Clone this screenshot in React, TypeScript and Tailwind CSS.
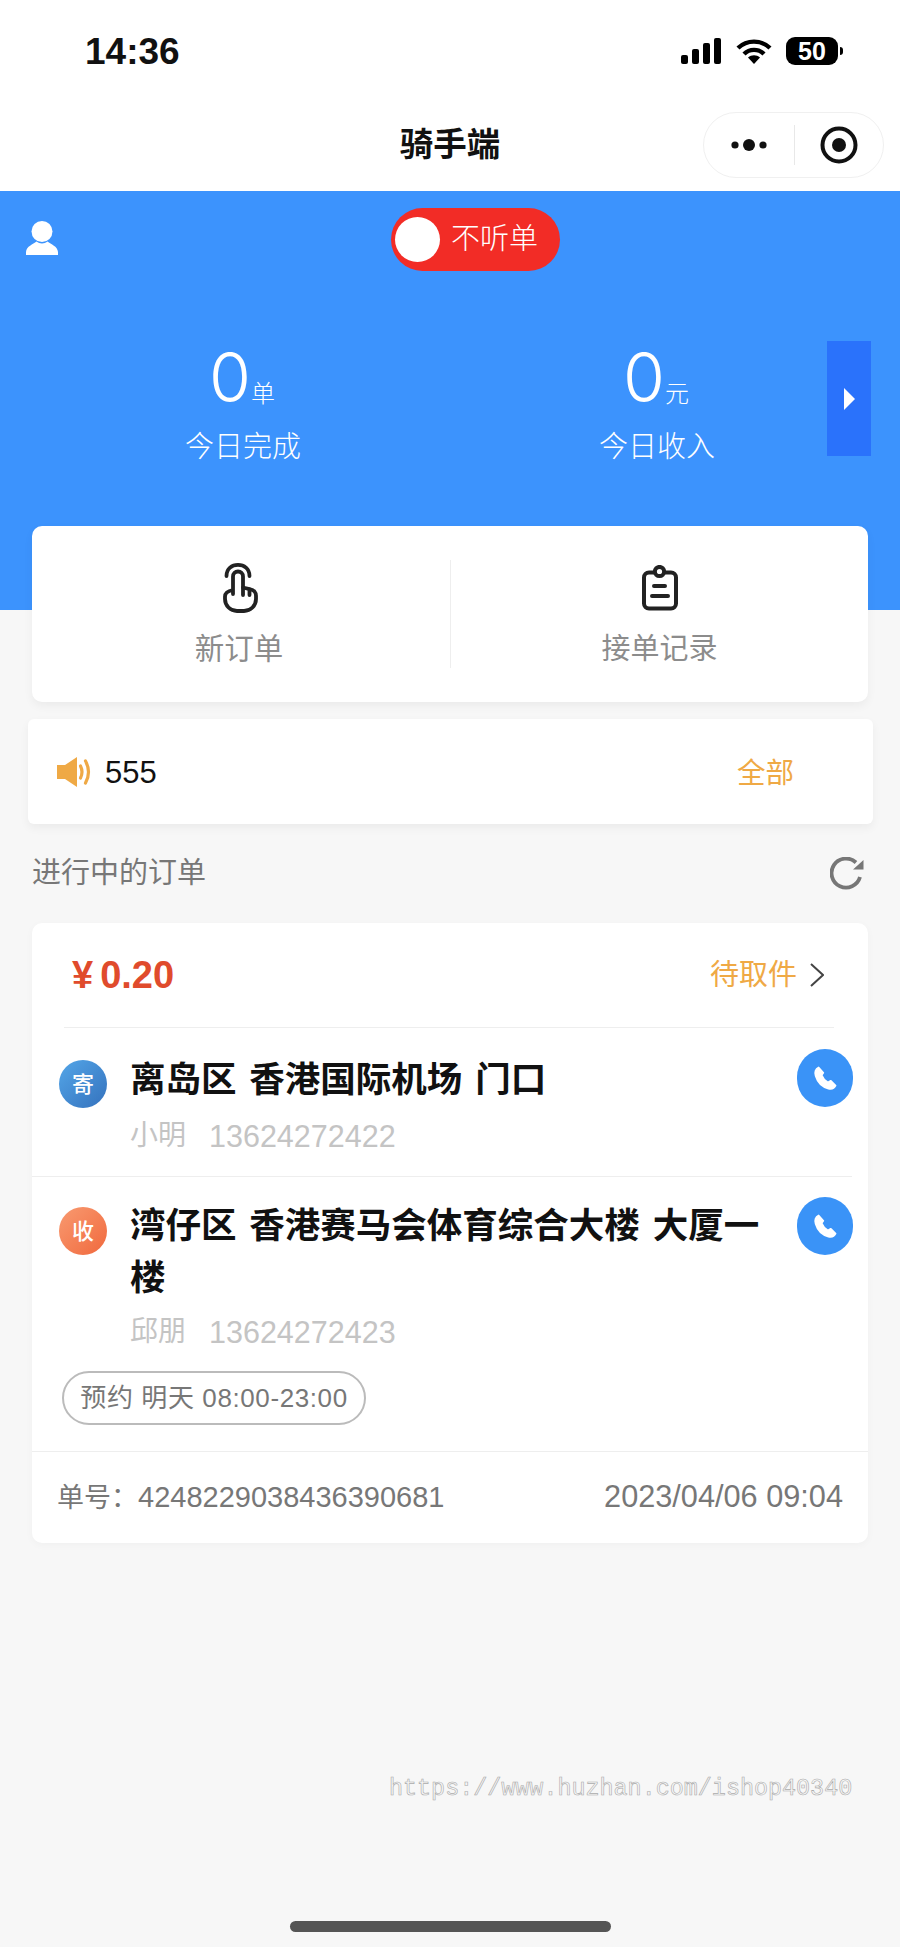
import { ReactNode } from 'react';

// Status bar glyphs
function SignalIcon() {
  return (
    <svg width="41" height="26" viewBox="0 0 41 26" fill="#000">
      <rect x="0" y="17" width="7" height="9" rx="2" />
      <rect x="11" y="11" width="7" height="15" rx="2" />
      <rect x="22" y="5" width="7" height="21" rx="2" />
      <rect x="33" y="0" width="7" height="26" rx="2" />
    </svg>
  );
}

function WifiIcon() {
  return (
    <svg width="36" height="25" viewBox="0 0 36 25" fill="none" stroke="#000" strokeWidth="4.4">
      <path d="M2 9 C11 0.5 25 0.5 34 9" />
      <path d="M8 15 C13.5 9.5 22.5 9.5 28 15" />
      <path d="M18 25 L12 18.5 C15.5 15.5 20.5 15.5 24 18.5 Z" fill="#000" stroke="none" />
    </svg>
  );
}

function Battery() {
  return (
    <div className="flex items-center gap-[2px]">
      <div className="w-[52px] h-[28px] bg-black rounded-[9px] flex items-center justify-center text-white font-bold text-[25px] leading-none">
        50
      </div>
      <div className="w-[3px] h-[8px] bg-black rounded-r-full" />
    </div>
  );
}

function PersonIcon() {
  return (
    <svg width="32" height="34" viewBox="0 0 32 34" fill="#fff">
      <ellipse cx="16" cy="10.5" rx="10.5" ry="10.5" />
      <path d="M0 34 V31 C0.5 25 7 23.5 10.5 20.5 C13.5 23 18.5 23 21.5 20.5 C25 23.5 31.5 25 32 31 V34 Z" />
    </svg>
  );
}

function HandIcon() {
  return (
    <svg width="36" height="50" viewBox="0 0 36 50" fill="none" stroke="#222" strokeWidth="3.8" strokeLinecap="round" strokeLinejoin="round">
      <path d="M3.5 13 C3.5 5.5 9 1.9 15 1.9 C21 1.9 26.5 5.5 26.5 13" />
      <path d="M10 31 V13.5 a5 5 0 0 1 10 0 V24.5 l7.5 1.8 a6.5 6.5 0 0 1 5.5 6.4 V36 a12 12 0 0 1 -12 12 H14 a12 12 0 0 1 -12 -12 V33.5 c0 -3 3 -5.5 8 -6.5" />
      <path d="M20 24.5 V32 M26.5 26.5 V32" />
    </svg>
  );
}

function ClipboardIcon() {
  return (
    <svg width="36" height="46" viewBox="0 0 36 46" fill="none" stroke="#222" strokeWidth="4" strokeLinecap="round">
      <rect x="2" y="7.5" width="32" height="36" rx="5" />
      <circle cx="17.5" cy="6.5" r="4.6" fill="#fff" />
      <path d="M12 21 H23 M10 31 H26" />
    </svg>
  );
}

function SpeakerIcon() {
  return (
    <svg width="36" height="30" viewBox="0 0 36 30" fill="none" stroke="#efa945">
      <path d="M1 8 H9 L21 0 V30 L9 22 H1 Z" fill="#efa945" stroke="none" />
      <path d="M24.5 9 Q27.5 15 24.5 21" strokeWidth="3.2" strokeLinecap="round" />
      <path d="M29.5 4 Q35.5 15 29.5 26" strokeWidth="3.2" strokeLinecap="round" />
    </svg>
  );
}

function RefreshIcon() {
  return (
    <svg width="34" height="33" viewBox="0 0 34 33" fill="none">
      <path d="M26 5.5 A14.5 14.5 0 1 0 30 20" stroke="#777" strokeWidth="3.8" />
      <path d="M33.5 3 V12.5 H23 Z" fill="#777" />
    </svg>
  );
}

function PhoneButton() {
  return (
    <div className="w-[56px] h-[58px] shrink-0 rounded-full bg-[#3a93f7] flex items-center justify-center">
      <svg width="28" height="28" viewBox="0 0 24 24" fill="#fff" stroke="#fff" strokeWidth="1.6" strokeLinejoin="round">
        <path d="M6.5 3 C4 4 3 7 4 10 C5.5 15 9.5 19.5 15 21 C18 21.7 20 20.5 21 18.5 L17 14.5 L14.5 16 C12 14.5 10 12 9 9.5 L10.5 7.5 Z" />
      </svg>
    </div>
  );
}

function Stat({ value, unit, label }: { value: string; unit: string; label: string }) {
  return (
    <div className="flex flex-col items-center text-white">
      <div className="flex items-baseline h-[68px] mr-[2px]">
        <span className="font-['Inter',sans-serif] font-light text-[68px] leading-[68px]">{value}</span>
        <span className="text-[24px] leading-none font-light">{unit}</span>
      </div>
      <div className="text-[29px] leading-[40px] mt-[16px] font-light">{label}</div>
    </div>
  );
}

function Address(props: {
  badge: string;
  badgeClass: string;
  title: ReactNode;
  name: string;
  phone: string;
  badgeTop: string;
  textTop: string;
  phoneTop: string;
  contactTop: string;
}) {
  return (
    <div className="flex pl-[27px]">
      <div className={`w-[48px] h-[48px] shrink-0 rounded-full flex items-center justify-center text-white text-[22px] font-medium ${props.badgeClass} ${props.badgeTop}`}>
        {props.badge}
      </div>
      <div className={`w-[667px] ml-[23px] pr-[16px] ${props.textTop}`}>
        <div className="text-[35.5px] leading-[52px] font-bold text-[#111] [word-spacing:3px]">{props.title}</div>
        <div className={`flex text-[#c4c4c4] text-[28px] leading-[40px] ${props.contactTop}`}>
          <span className="w-[79px]">{props.name}</span>
          <span className="text-[30.5px]">{props.phone}</span>
        </div>
      </div>
      <div className={props.phoneTop}>
        <PhoneButton />
      </div>
    </div>
  );
}

export default function App() {
  return (
    <div className="w-[900px] h-[1947px] overflow-hidden bg-[#f7f7f7] font-['Liberation_Sans','Noto_Sans_CJK_SC',sans-serif]">
      <div className="bg-white">
        {/* status bar */}
        <div className="h-[102px] flex items-center justify-between pl-[85px] pr-[57px]">
          <span className="text-[37px] font-bold text-[#111] leading-none">14:36</span>
          <div className="flex items-center gap-[14px]">
            <SignalIcon />
            <WifiIcon />
            <Battery />
          </div>
        </div>
        {/* nav bar */}
        <div className="h-[89px] pb-[3px] grid grid-cols-[1fr_auto_1fr] items-center">
          <div />
          <div className="text-[33.5px] font-bold text-[#111] leading-none">骑手端</div>
          <div className="justify-self-end mr-[16px] w-[181px] h-[66px] rounded-full border border-[#f0f0f0] flex items-center">
            <div className="w-[90px] flex items-center justify-center">
              <svg width="36" height="14" viewBox="0 0 36 14" fill="#111">
                <circle cx="4" cy="7" r="3.6" />
                <circle cx="18" cy="7" r="6" />
                <circle cx="32" cy="7" r="3.6" />
              </svg>
            </div>
            <div className="w-px h-[40px] bg-[#e8e8e8]" />
            <div className="flex-1 flex items-center justify-center">
              <svg width="38" height="38" viewBox="0 0 38 38">
                <circle cx="19" cy="19" r="16.5" fill="none" stroke="#111" strokeWidth="4" />
                <circle cx="19" cy="19" r="7" fill="#111" />
              </svg>
            </div>
          </div>
        </div>
      </div>

      {/* blue header */}
      <div className="relative h-[419px] bg-[#3c93fd]">
        <div className="flex items-start pt-[17px]">
          <div className="ml-[26px] mt-[13px]">
            <PersonIcon />
          </div>
          <div className="ml-[333px] w-[169px] h-[63px] rounded-full bg-[#f22c26] flex items-center pl-[4px]">
            <div className="w-[45px] h-[45px] rounded-full bg-white" />
            <span className="ml-[11px] text-white text-[29px] leading-none font-light">不听单</span>
          </div>
        </div>
        <div className="ml-[36px] w-[828px] mt-[72px] grid grid-cols-2">
          <Stat value="0" unit="单" label="今日完成" />
          <Stat value="0" unit="元" label="今日收入" />
        </div>
        <div className="absolute right-[29px] top-[150px] w-[44px] h-[115px] bg-[#2a72fb] flex items-center justify-center">
          <svg width="11" height="22" viewBox="0 0 11 22" fill="#fff">
            <path d="M0 0 L11 11 L0 22 Z" />
          </svg>
        </div>
      </div>

      {/* entry card */}
      <div className="-mt-[84px] relative ml-[32px] w-[836px] h-[176px] bg-white rounded-[10px] shadow-[0_4px_10px_rgba(0,0,0,0.05)] flex items-start">
        <div className="w-[418px] flex flex-col items-center pt-[37px]">
          <HandIcon />
          <span className="mt-[16px] mr-[4px] text-[29.5px] leading-[40px] text-[#8c8c8c]">新订单</span>
        </div>
        <div className="w-px h-[108px] mt-[34px] bg-[#eeeeee]" />
        <div className="flex-1 flex flex-col items-center pt-[39px]">
          <ClipboardIcon />
          <span className="mt-[18px] text-[29px] leading-[40px] text-[#8c8c8c]">接单记录</span>
        </div>
      </div>

      {/* notice */}
      <div className="mt-[17px] ml-[28px] w-[845px] h-[105px] bg-white rounded-[6px] shadow-[0_4px_10px_rgba(0,0,0,0.05)] flex items-center pl-[28px] pr-[79px]">
        <SpeakerIcon />
        <span className="ml-[13px] mt-[2px] text-[31px] leading-none text-[#111]">555</span>
        <span className="ml-auto mt-[3px] text-[28.5px] leading-none text-[#efa945]">全部</span>
      </div>

      {/* section title */}
      <div className="h-[99px] mx-[32px] flex items-center justify-between pr-[4px]">
        <span className="text-[29px] leading-none text-[#777]">进行中的订单</span>
        <RefreshIcon />
      </div>

      {/* order card */}
      <div className="ml-[32px] w-[836px] h-[620px] bg-white rounded-[10px] shadow-[0_2px_8px_rgba(0,0,0,0.03)]">
        <div className="h-[104px] flex items-center justify-between pl-[40px] pr-[44px]">
          <div className="text-[#e04b2c] font-bold leading-none flex items-baseline text-[38px]">
            <span>¥</span>
            <span className="ml-[7px]">0.20</span>
          </div>
          <div className="flex items-center">
            <span className="text-[29px] leading-none text-[#efa945]">待取件</span>
            <svg className="ml-[13px]" width="14" height="24" viewBox="0 0 14 24" fill="none" stroke="#444" strokeWidth="2">
              <path d="M1 1 L13 12 L1 23" />
            </svg>
          </div>
        </div>
        <div className="ml-[32px] w-[770px] h-px bg-[#eeeeee]" />

        <div className="h-[148px]">
          <Address
            badge="寄"
            badgeClass="bg-gradient-to-br from-[#54a6e8] to-[#3572bd]"
            title="离岛区 香港国际机场 门口"
            name="小明"
            phone="13624272422"
            badgeTop="mt-[32px]"
            textTop="pt-[26px]"
            phoneTop="pt-[21px]"
            contactTop="mt-[10px]"
          />
        </div>
        <div className="w-[820px] h-px bg-[#eeeeee]" />

        <div className="h-[274px]">
          <Address
            badge="收"
            badgeClass="bg-gradient-to-br from-[#f89a70] to-[#f0683c]"
            title="湾仔区 香港赛马会体育综合大楼 大厦一楼"
            name="邱朋"
            phone="13624272423"
            badgeTop="mt-[30px]"
            textTop="pt-[23px]"
            phoneTop="pt-[20px]"
            contactTop="mt-[8px]"
          />
          <div className="ml-[30px] mt-[19px] w-[304px] h-[54px] rounded-full border-2 border-[#bbbbbb] flex items-center justify-center text-[26px] leading-none text-[#777] tracking-[0.6px]">
            预约 明天 08:00-23:00
          </div>
        </div>
        <div className="h-px bg-[#eeeeee]" />

        <div className="h-[91px] flex items-center justify-between px-[25px] text-[#777] leading-none">
          <span className="text-[27px]">
            单号：<span className="text-[29px]">4248229038436390681</span>
          </span>
          <span className="text-[30.7px]">2023/04/06 09:04</span>
        </div>
      </div>

      {/* watermark */}
      <div className="mt-[233px] ml-[389px] font-['Liberation_Mono',monospace] text-[23.4px] leading-[26px] text-transparent [-webkit-text-stroke:0.6px_#aaaaaa] whitespace-nowrap">
        https://www.huzhan.com/ishop40340
      </div>

      {/* home indicator */}
      <div className="mt-[119px] ml-[290px] w-[321px] h-[11px] rounded-full bg-[#555555]" />
    </div>
  );
}
